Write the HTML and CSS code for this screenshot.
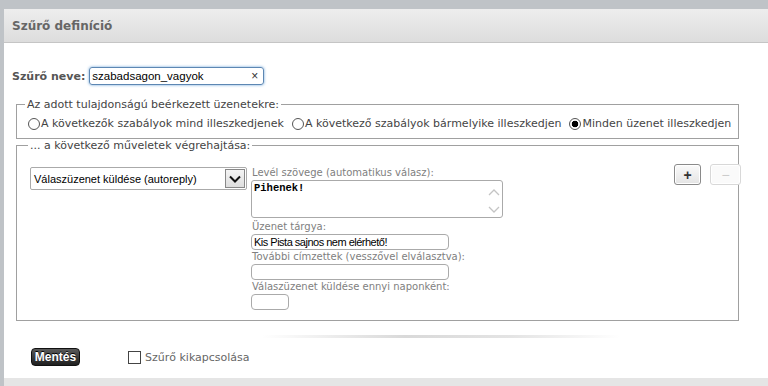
FILE: index.html
```html
<!DOCTYPE html>
<html lang="hu">
<head>
    <meta charset="UTF-8">
    <title>Szűrő definíció</title>
    <link rel="stylesheet" href="styles.css">
</head>
<body>
    <div class="page">
        <div class="panel">
            <div class="panel-header">Szűrő definíció</div>

            <div class="name-row">
                <label class="name-label" for="filter-name">Szűrő neve:</label>
                <div class="name-input">
                    <input id="filter-name" type="text" value="szabadsagon_vagyok">
                    <span class="clear">×</span>
                </div>
            </div>

            <fieldset class="box box-rules">
                <legend>Az adott tulajdonságú beérkezett üzenetekre:</legend>
                <div class="radio-row">
                    <label class="radio"><span class="radio-dot"></span>A következők szabályok mind illeszkedjenek</label>
                    <label class="radio"><span class="radio-dot"></span>A következő szabályok bármelyike illeszkedjen</label>
                    <label class="radio"><span class="radio-dot checked"></span>Minden üzenet illeszkedjen</label>
                </div>
            </fieldset>

            <fieldset class="box box-actions">
                <legend>... a következő műveletek végrehajtása:</legend>
                <div class="action-row">
                    <div class="select">
                        <span class="select-text">Válaszüzenet küldése (autoreply)</span>
                        <span class="select-arrow">
                            <svg viewBox="0 0 12 8" width="12" height="8"><path d="M1 1.5L6 6.5L11 1.5" fill="none" stroke="#111" stroke-width="2"/></svg>
                        </span>
                    </div>

                    <div class="fields">
                        <div class="field-label">Levél szövege (automatikus válasz):</div>
                        <div class="textarea">
                            <span class="textarea-text">Pihenek!</span>
                            <span class="scroll">
                                <svg viewBox="0 0 12 8" width="12" height="8"><path d="M1 7L6 2L11 7" fill="none" stroke="#c4c4c4" stroke-width="1.3"/></svg>
                                <svg viewBox="0 0 12 8" width="12" height="8"><path d="M1 1L6 6L11 1" fill="none" stroke="#c4c4c4" stroke-width="1.3"/></svg>
                            </span>
                        </div>
                        <div class="field-label">Üzenet tárgya:</div>
                        <input class="text-input" type="text" value="Kis Pista sajnos nem elérhető!">
                        <div class="field-label">További címzettek (vesszővel elválasztva):</div>
                        <input class="text-input" type="text" value="">
                        <div class="field-label">Válaszüzenet küldése ennyi naponként:</div>
                        <input class="text-input small" type="text" value="">
                    </div>

                    <div class="row-buttons">
                        <span class="btn-small">+</span>
                        <span class="btn-small disabled">−</span>
                    </div>
                </div>
            </fieldset>

            <div class="separator"></div>

            <div class="footer-row">
                <span class="btn-save">Mentés</span>
                <label class="check"><span class="check-box"></span>Szűrő kikapcsolása</label>
            </div>

            <div class="panel-footer"></div>
        </div>
    </div>
</body>
</html>
```

FILE: styles.css
```css
body {
    margin: 0;
    padding: 0;
    background-color: #bfc3c7;
    font-family: "DejaVu Sans", Verdana, sans-serif;
    font-size: 11px;
    color: #444;
}

.page {
    padding: 9px 0 0 4px;
    height: 377px;
    overflow: hidden;
}

.panel {
    background-color: #ffffff;
    height: 377px;
    display: flex;
    flex-direction: column;
}

.panel-header {
    height: 34px;
    box-sizing: border-box;
    padding: 10px 0 0 8px;
    background: linear-gradient(#ededed, #dddddd);
    border-bottom: 1px solid #c5c5c5;
    font-weight: bold;
    font-size: 12px;
    line-height: 14px;
    color: #666;
}

/* filter name */
.name-row {
    display: flex;
    align-items: center;
    margin: 24px 0 0 8px;
    height: 18px;
}

.name-label {
    font-weight: bold;
    font-size: 11px;
    color: #555;
    margin-right: 4px;
}

.name-input {
    position: relative;
    width: 175px;
    height: 18px;
    box-sizing: border-box;
    border: 1px solid #5d87b3;
    border-radius: 3px;
    box-shadow: 0 0 3px #6aa3d8;
}

.name-input input {
    border: none;
    outline: none;
    padding: 0 0 0 2px;
    margin: 0;
    width: 150px;
    height: 16px;
    font-family: "Liberation Sans", Arial, sans-serif;
    font-size: 11.5px;
    color: #000;
    background: transparent;
}

.clear {
    position: absolute;
    right: 5px;
    top: 0;
    font-family: "Liberation Sans", Arial, sans-serif;
    font-size: 12px;
    line-height: 16px;
    color: #333;
}

/* fieldsets */
.box {
    border: 1px solid #a0a0a0;
    margin: 0 29px 0 12px;
    min-width: 0;
}

.box legend {
    padding: 0 2px;
    margin-left: -2px;
    font-size: 11px;
    line-height: 13px;
    color: #444;
}

.box-rules {
    margin-top: 13px;
    padding: 0 0 7px 10px;
}

.radio-row {
    display: flex;
    gap: 8px;
    margin: 6px 0 0 1px;
    line-height: 14px;
}

.radio {
    display: flex;
    align-items: center;
    gap: 1px;
    white-space: nowrap;
}

.radio-dot {
    width: 12px;
    height: 12px;
    border: 1px solid #555;
    border-radius: 50%;
    box-sizing: border-box;
}

.radio-dot.checked {
    background: radial-gradient(circle, #000 0, #000 3px, #fff 3.6px);
}

.box-actions {
    margin-top: 0;
    padding: 0 0 10px 13px;
}

.action-row {
    display: flex;
    align-items: flex-start;
    margin-top: 15px;
}

.select {
    width: 217px;
    height: 23px;
    box-sizing: border-box;
    border: 1px solid #aaaaaa;
    border-radius: 2px;
    display: flex;
    align-items: center;
    justify-content: space-between;
    font-family: "Liberation Sans", Arial, sans-serif;
    font-size: 11px;
    color: #000;
    padding-left: 3px;
}

.select-arrow {
    width: 20px;
    height: 19px;
    margin-right: 1px;
    box-sizing: border-box;
    border: 1px solid #888;
    background: linear-gradient(#f4f4f4, #dedede);
    display: flex;
    align-items: center;
    justify-content: center;
}

.fields {
    display: flex;
    flex-direction: column;
    margin-left: 4px;
    margin-top: -1px;
}

.field-label {
    font-size: 10px;
    color: #808080;
    line-height: 13px;
    padding-left: 1px;
}

.textarea {
    width: 252px;
    height: 38px;
    box-sizing: border-box;
    border: 1px solid #aaaaaa;
    border-radius: 3px;
    display: flex;
    justify-content: space-between;
    margin: 1px 0 2px 0;
}

.textarea-text {
    font-family: "Liberation Mono", "Courier New", monospace;
    font-size: 10.5px;
    font-weight: bold;
    color: #000;
    padding: 1px 0 0 2px;
}

.scroll {
    display: flex;
    flex-direction: column;
    justify-content: space-between;
    padding: 7px 2px 3px 0;
}

.text-input {
    width: 198px;
    height: 16px;
    box-sizing: border-box;
    border: 1px solid #aaaaaa;
    border-radius: 4px;
    margin: 1px 0 0 0;
    padding: 0 2px;
    font-family: "Liberation Sans", Arial, sans-serif;
    font-size: 11px;
    letter-spacing: -0.5px;
    color: #000;
    outline: none;
}

.text-input.small {
    width: 38px;
}

.row-buttons {
    display: flex;
    gap: 9px;
    margin-left: auto;
    margin-right: -3px;
    margin-top: -3px;
}

.btn-small {
    width: 27px;
    height: 21px;
    box-sizing: border-box;
    border: 1px solid #8a8a8a;
    border-radius: 3px;
    background: linear-gradient(#fafafa, #e4e4e4);
    box-shadow: inset 0 0 0 1px #fff;
    display: flex;
    align-items: center;
    justify-content: center;
    font-family: "Liberation Sans", Arial, sans-serif;
    font-weight: bold;
    font-size: 14px;
    color: #333;
}

.btn-small.disabled {
    width: 31px;
    border-color: #d8d8d8;
    background: #fafafa;
    color: #ccc;
    font-weight: normal;
}

.separator {
    height: 3px;
    margin: 14px 0 0 258px;
    width: 358px;
    background: linear-gradient(to right, rgba(216, 216, 216, 0) 0, #d9d9d9 40%, #e4e4e4 70%, rgba(230, 230, 230, 0) 100%);
}

.footer-row {
    display: flex;
    align-items: center;
    margin: 10px 0 0 27px;
    height: 18px;
}

.btn-save {
    width: 49px;
    height: 18px;
    box-sizing: border-box;
    border-radius: 4px;
    background: linear-gradient(#5a5a5a, #1f1f1f);
    border: 1px solid #111;
    color: #fff;
    font-family: "Liberation Sans", Arial, sans-serif;
    font-weight: bold;
    font-size: 12px;
    text-shadow: 0 -1px 0 #000;
    display: flex;
    align-items: center;
    justify-content: center;
}

.check {
    display: flex;
    align-items: center;
    gap: 4px;
    margin-left: 48px;
    color: #666;
    font-size: 11px;
}

.check-box {
    width: 13px;
    height: 13px;
    box-sizing: border-box;
    border: 1px solid #444;
}

.panel-footer {
    margin-top: auto;
    height: 8px;
    background: #e5e5e5;
}
```
